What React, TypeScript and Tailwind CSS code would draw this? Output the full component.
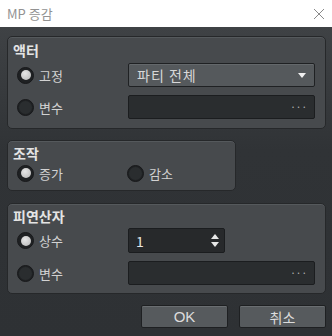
import React, { useState } from 'react';

const FONT = { fontFamily: '"Noto Sans CJK KR", "Noto Sans", sans-serif' };

function Radio({ checked, label, onClick }: { checked: boolean; label: string; onClick: () => void }) {
  return (
    <button onClick={onClick} className="flex items-center gap-[5px] text-[13px] text-[#d2d2d2]">
      <span className="w-[17px] h-[17px] rounded-full bg-[#1f2123] border border-[#18191b] flex items-center justify-center">
        {checked && <span className="w-[10px] h-[10px] rounded-full bg-[radial-gradient(circle_at_40%_35%,#e6e6e6,#b5b5b5)]" />}
        {!checked && <span className="w-[13px] h-[13px] rounded-full bg-[#2a2d2f]" />}
      </span>
      <span className="leading-none">{label}</span>
    </button>
  );
}

function BrowseField() {
  return (
    <div className="w-[187px] h-[24px] bg-[#2a2d2f] border border-[#1b1d1f] rounded-[2px] flex items-center justify-end pr-[7px]">
      <span className="text-[10px] text-[#b5b5b5] leading-none">···</span>
    </div>
  );
}

function Group({ title, className, children }: { title: string; className: string; children: React.ReactNode }) {
  return (
    <div className={`border border-[#26282a] rounded-[5px] bg-[#474a4d] shadow-[inset_0_1px_0_#55595c] ${className}`}>
      <div className="h-[18px] pl-[5px] flex items-center text-[14px] font-bold text-[#e4e4e4] leading-none">{title}</div>
      {children}
    </div>
  );
}

export default function App() {
  const [actor, setActor] = useState<'fixed' | 'var'>('fixed');
  const [op, setOp] = useState<'inc' | 'dec'>('inc');
  const [operand, setOperand] = useState<'const' | 'var'>('const');
  const [value, setValue] = useState<number>(1);

  return (
    <div className="w-[332px] h-[336px] flex flex-col overflow-hidden" style={FONT}>
      <div className="h-[27px] bg-white flex items-center justify-between pl-[7px] pr-[6px] shrink-0">
        <span className="text-[13px] text-[#929292]">MP 증감</span>
        <svg width="12" height="12" viewBox="0 0 12 12" className="mr-[1px]">
          <path d="M1 1 L11 11 M11 1 L1 11" stroke="#8a8a8a" strokeWidth="1" />
        </svg>
      </div>

      <div className="flex-1 bg-[linear-gradient(#3f4245,#303336_40%,#2e3134)] pl-[7px] pr-[6px] pt-[9px]">
        <Group title="액터" className="w-[319px] h-[93px] pt-[4px]">
          <div className="mt-[4px] flex flex-col gap-[8px]">
            <div className="flex items-center h-[24px]">
              <div className="w-[120px] pl-[9px]">
                <Radio checked={actor === 'fixed'} label="고정" onClick={() => setActor('fixed')} />
              </div>
              <div className="w-[187px] h-[24px] bg-[#55595c] border border-[#1f2123] rounded-[2px] flex items-center justify-between pl-[8px] pr-[8px] shadow-[inset_0_1px_0_#64686b]">
                <span className="text-[14px] text-[#d8d8d8] tracking-[1px] leading-none">파티 전체</span>
                <svg width="8" height="5" viewBox="0 0 8 5">
                  <path d="M0 0 H8 L4 5 Z" fill="#f0f0f0" />
                </svg>
              </div>
            </div>
            <div className="flex items-center h-[24px]">
              <div className="w-[120px] pl-[9px]">
                <Radio checked={actor === 'var'} label="변수" onClick={() => setActor('var')} />
              </div>
              <BrowseField />
            </div>
          </div>
        </Group>

        <Group title="조작" className="w-[229px] h-[51px] mt-[11px] pt-[3px]">
          <div className="mt-[2px] h-[18px] flex items-center">
            <div className="w-[119px] pl-[9px]">
              <Radio checked={op === 'inc'} label="증가" onClick={() => setOp('inc')} />
            </div>
            <Radio checked={op === 'dec'} label="감소" onClick={() => setOp('dec')} />
          </div>
        </Group>

        <Group title="피연산자" className="w-[319px] h-[91px] mt-[12px] pt-[3px]">
          <div className="mt-[3px] flex flex-col gap-[8px]">
            <div className="flex items-center h-[25px]">
              <div className="w-[120px] pl-[9px]">
                <Radio checked={operand === 'const'} label="상수" onClick={() => setOperand('const')} />
              </div>
              <div className="w-[97px] h-[25px] bg-[#27292b] border border-[#1b1d1f] rounded-[2px] flex items-center justify-between pl-[7px] pr-[5px]">
                <span className="text-[14px] text-[#e6e6e6] leading-none">{value}</span>
                <div className="flex flex-col gap-[3px]">
                  <button onClick={() => setValue(value + 1)}>
                    <svg width="8" height="5" viewBox="0 0 8 5" className="block">
                      <path d="M0 5 H8 L4 0 Z" fill="#e8e8e8" />
                    </svg>
                  </button>
                  <button onClick={() => setValue(value - 1)}>
                    <svg width="8" height="5" viewBox="0 0 8 5" className="block">
                      <path d="M0 0 H8 L4 5 Z" fill="#e8e8e8" />
                    </svg>
                  </button>
                </div>
              </div>
            </div>
            <div className="flex items-center h-[24px]">
              <div className="w-[120px] pl-[9px]">
                <Radio checked={operand === 'var'} label="변수" onClick={() => setOperand('var')} />
              </div>
              <BrowseField />
            </div>
          </div>
        </Group>

        <div className="mt-[11px] flex justify-end gap-[11px]">
          <button className="w-[87px] h-[23px] bg-[#565a5d] border border-[#1e2022] rounded-[2px] shadow-[inset_0_1px_0_#6a6e71] text-[15px] font-normal text-[#dcdcdc] leading-none" style={{ fontFamily: '"Liberation Sans", sans-serif' }}>OK</button>
          <button className="w-[87px] h-[23px] bg-[#565a5d] border border-[#1e2022] rounded-[2px] shadow-[inset_0_1px_0_#6a6e71] text-[14px] text-[#dcdcdc] leading-none">취소</button>
        </div>
      </div>
    </div>
  );
}
